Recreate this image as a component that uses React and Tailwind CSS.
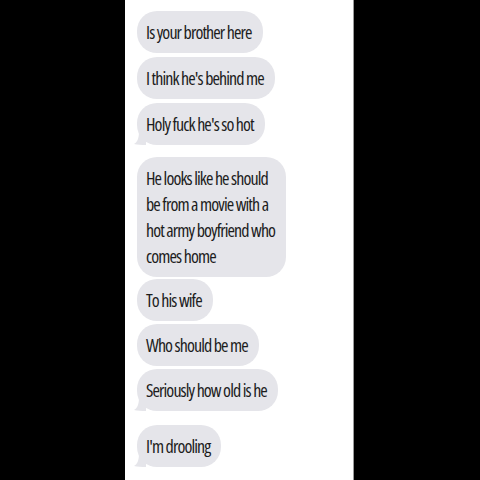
const messages = [
  { lines: ["Is your brother here"], gap: "mt-0" },
  { lines: ["I think he's behind me"], gap: "mt-[4px]" },
  { lines: ["Holy fuck he's so hot"], gap: "mt-[4px]", tail: true },
  {
    lines: ["He looks like he should", "be from a movie with a", "hot army boyfriend who", "comes home"],
    gap: "mt-[12px]",
  },
  { lines: ["To his wife"], gap: "mt-[2px]" },
  { lines: ["Who should be me"], gap: "mt-[3px]" },
  { lines: ["Seriously how old is he"], gap: "mt-[3px]", tail: true },
  { lines: ["I'm drooling"], gap: "mt-[14px]", tail: true },
];

const Tail = () => (
  <svg className="absolute left-[-3px] bottom-0" width="12" height="14" viewBox="0 0 12 14">
    <path d="M12 0 L12 14 C8 14 3 13.6 0 13 C3 11.5 5 8 5 0 Z" fill="#e5e5ea" />
  </svg>
);

const Bubble = ({ lines, gap, tail }) => (
  <div className={`relative self-start ${gap}`}>
    {tail && <Tail />}
    <div
      className="relative rounded-[20px] bg-[#e5e5ea] pl-[9px] pr-[11px] py-[8px] text-[18px] leading-[26px] text-[#1c1c1c] tracking-[-0.9px] whitespace-nowrap"
      style={{ fontFamily: "'Open Sans', sans-serif", fontStretch: "75%" }}
    >
      {lines.map((l, i) => (
        <div key={i}>{l}</div>
      ))}
    </div>
  </div>
);

export default function App() {
  return (
    <div className="h-[480px] w-[480px] bg-black pl-[125px]">
      <div className="h-full w-[229px] bg-white border-r border-[#9a9a9a] flex flex-col pl-[12px] pt-[11px]">
        {messages.map((m, i) => (
          <Bubble key={i} {...m} />
        ))}
      </div>
    </div>
  );
}
